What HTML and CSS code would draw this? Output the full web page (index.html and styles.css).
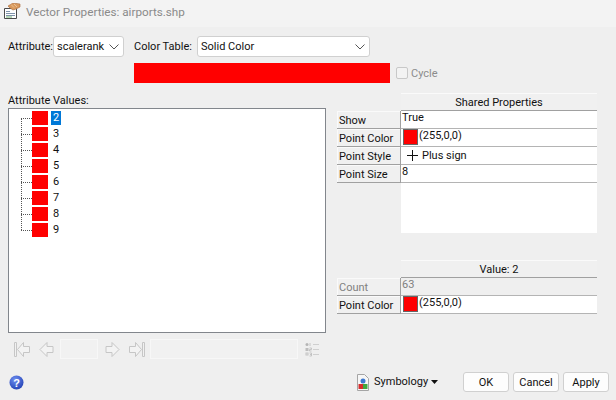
FILE: index.html
```html
<!DOCTYPE html>
<html lang="en">
<head>
<meta charset="utf-8">
<title>Vector Properties: airports.shp</title>
<link rel="stylesheet" href="styles.css">
</head>
<body>
<div class="window">
  <header class="titlebar">
    <svg class="title-icon" width="18" height="18" viewBox="0 0 18 18">
      <path d="M1.500 5.500h12v10h-12z" fill="#fff" stroke="#4a4a4a"/>
      <path d="M3 8.500h4M3 10.500h9M3 12.500h9" stroke="#7f93aa"/>
      <path d="M3 14h6" stroke="#6fae6f"/>
      <path d="M5 3l5-3 7 1v3l-4 2-3 1-3-2z" fill="#d9995c" stroke="#a8693a" stroke-width=".6"/>
      <path d="M8 1.500l3 3M11 1l3 3" stroke="#f0d0a8" stroke-width=".7"/>
    </svg>
    <span class="title-text">Vector Properties: airports.shp</span>
  </header>

  <main class="content">
    <div class="row-top">
      <label class="lbl lbl-attr">Attribute:</label>
      <div class="select sel-attr"><span>scalerank</span><svg class="chev" width="10" height="6" viewBox="0 0 10 6"><path d="M.5.500l4.500 4.500 4.500-4.500" fill="none" stroke="#555"/></svg></div>
      <label class="lbl lbl-table">Color Table:</label>
      <div class="select sel-table"><span>Solid Color</span><svg class="chev" width="10" height="6" viewBox="0 0 10 6"><path d="M.5.500l4.500 4.500 4.500-4.500" fill="none" stroke="#555"/></svg></div>
    </div>
    <div class="row-bar">
      <div class="color-bar"></div>
      <span class="check"></span>
      <span class="cycle">Cycle</span>
    </div>

    <div class="columns">
      <section class="left">
        <div class="lbl values-label">Attribute Values:</div>
        <div class="tree">
          <div class="tree-line"></div>
          <div class="node"><i class="dots"></i><i class="swatch"></i><span class="val sel">2</span></div>
          <div class="node"><i class="dots"></i><i class="swatch"></i><span class="val">3</span></div>
          <div class="node"><i class="dots"></i><i class="swatch"></i><span class="val">4</span></div>
          <div class="node"><i class="dots"></i><i class="swatch"></i><span class="val">5</span></div>
          <div class="node"><i class="dots"></i><i class="swatch"></i><span class="val">6</span></div>
          <div class="node"><i class="dots"></i><i class="swatch"></i><span class="val">7</span></div>
          <div class="node"><i class="dots"></i><i class="swatch"></i><span class="val">8</span></div>
          <div class="node"><i class="dots"></i><i class="swatch"></i><span class="val">9</span></div>
        </div>
        <div class="nav">
          <svg class="nav-ic ic-first" width="17" height="17" viewBox="0 0 17 17"><path d="M.5 1.500h2v14h-2z" fill="#f1f1f1" stroke="#c6c6c6"/><path d="M15.500 5.500h-6v-4l-6 7 6 7v-4h6z" fill="#f3f3f3" stroke="#c6c6c6"/></svg>
          <svg class="nav-ic ic-prev" width="16" height="17" viewBox="0 0 16 17"><path d="M15 5.500h-6v-4l-7 7 7 7v-4h6z" fill="#f3f3f3" stroke="#c6c6c6"/></svg>
          <div class="nav-box nav-small"></div>
          <svg class="nav-ic ic-next" width="16" height="17" viewBox="0 0 16 17"><path d="M1 5.500h6v-4l7 7-7 7v-4h-6z" fill="#f3f3f3" stroke="#c6c6c6"/></svg>
          <svg class="nav-ic ic-last" width="17" height="17" viewBox="0 0 17 17"><path d="M14.500 1.500h2v14h-2z" fill="#f1f1f1" stroke="#c6c6c6"/><path d="M1.500 5.500h6v-4l6 7-6 7v-4h-6z" fill="#f3f3f3" stroke="#c6c6c6"/></svg>
          <div class="nav-box nav-wide"></div>
          <svg class="nav-ic ic-list" width="15" height="15" viewBox="0 0 15 15"><path d="M8 2.500h6M8 7.500h6M8 12.500h6" stroke="#cfcfcf"/><circle cx="2" cy="2.500" r="1.500" fill="#b5b5b5"/><rect x=".5" y="6" width="3" height="3" fill="#bdbdbd"/><rect x="1" y="11" width="2" height="2" fill="none" stroke="#c4c4c4"/><path d="M5 1v3M4.500 6h2v1.500h-2v1.500h2M4.500 11h2v3h-2M5 12.500h1.500" fill="none" stroke="#bbb" stroke-width=".8"/></svg>
        </div>
      </section>

      <section class="right">
        <div class="grid grid-shared">
          <div class="corner"></div><div class="head">Shared Properties</div>
          <div class="key">Show</div><div class="cell">True</div>
          <div class="key">Point Color</div><div class="cell"><i class="cell-swatch"></i>(255,0,0)</div>
          <div class="key">Point Style</div><div class="cell cell-style"><svg class="plus" width="11" height="11" viewBox="0 0 11 11"><path d="M5.500 0v11M0 5.500h11" stroke="#111"/></svg>Plus sign</div>
          <div class="key">Point Size</div><div class="cell">8</div>
          <div class="corner"></div><div class="filler"></div>
        </div>
        <div class="grid grid-value">
          <div class="corner"></div><div class="head">Value: 2</div>
          <div class="key key-dim">Count</div><div class="cell cell-dim">63</div>
          <div class="key">Point Color</div><div class="cell"><i class="cell-swatch"></i>(255,0,0)</div>
        </div>
      </section>
    </div>

    <footer class="bottom">
      <svg class="help" width="15" height="15" viewBox="0 0 15 15"><defs><radialGradient id="hg" cx=".4" cy=".3" r=".8"><stop offset="0" stop-color="#6f8ff0"/><stop offset="1" stop-color="#1c3bb0"/></radialGradient></defs><circle cx="7.500" cy="7.500" r="7" fill="url(#hg)"/><text x="7.500" y="11.500" text-anchor="middle" class="help-q">?</text></svg>
      <div class="symbology">
        <svg width="14" height="17" viewBox="0 0 14 17"><path d="M1.500.5h7l4 4v12h-11z" fill="#f6f6f6" stroke="#a5a5a5"/><circle cx="7" cy="7" r="2.500" fill="#3c78d0"/><rect x="2.500" y="10" width="4.500" height="5" fill="#d62c2c"/><rect x="7" y="10" width="4.500" height="5" fill="#3fa83f"/></svg>
        <span>Symbology</span>
        <svg class="caret" width="7" height="4" viewBox="0 0 7 4"><path d="M0 0h7l-3.500 4z" fill="#111"/></svg>
      </div>
      <button class="btn">OK</button>
      <button class="btn">Cancel</button>
      <button class="btn">Apply</button>
    </footer>
  </main>
</div>
</body>
</html>
```
FILE: styles.css
```css
* { box-sizing: border-box; }
html, body { margin: 0; padding: 0; }
body { width: 616px; height: 400px; overflow: hidden; background: #efefef; font-family: Roboto, "Noto Sans", sans-serif; font-size: 11px; color: #111; line-height: 16px; white-space: nowrap; }
.window { height: 400px; display: flex; flex-direction: column; }
.titlebar { height: 27px; background: #f3f3f3; display: flex; align-items: center; padding: 3px 0 6px 3px; flex: none; }
.title-icon { flex: none; }
.title-text { margin-left: 5px; font-size: 11.7px; color: #8a8a8a; }
.content { flex: 1; padding: 9px 0 0 8px; display: flex; flex-direction: column; }
.row-top { display: flex; align-items: center; height: 21px; }
.lbl-attr { width: 45px; flex: none; padding-top: 1px; }
.lbl-table { width: 63px; margin-left: 10px; flex: none; }
.select { height: 21px; background: #fff; border: 1px solid #d0d0d0; border-radius: 3px; display: flex; align-items: center; justify-content: space-between; flex: none; padding: 0 4px 0 3px; }
.sel-attr { width: 71px; }
.sel-table { width: 173px; }
.row-bar { display: flex; align-items: center; height: 20px; margin-top: 6px; padding-left: 126px; }
.color-bar { width: 256px; height: 20px; background: #f00; }
.check { width: 12px; height: 12px; margin-left: 6px; border: 1px solid #c8c8c8; border-radius: 2px; background: #f3f3f3; }
.cycle { margin-left: 3px; padding-top: 1px; color: #8c8c8c; }
.columns { display: flex; margin-top: 10px; flex: none; }
.left { width: 318px; flex: none; }
.values-label { height: 15px; }
.tree { position: relative; height: 225px; background: #fff; border: 1px solid #82868c; padding: 1px 0 0 0; }
.tree-line { position: absolute; left: 12px; top: 9px; height: 112px; border-left: 1px dotted #555; }
.node { height: 16px; display: flex; align-items: center; }
.dots { width: 11px; margin-left: 12px; border-top: 1px dotted #555; flex: none; }
.swatch { width: 16px; height: 14px; background: #f00; flex: none; }
.val { margin-left: 3px; padding: 0 2px; height: 14px; line-height: 14px; }
.val.sel { background: #0078d7; color: #fff; }
.nav { display: flex; align-items: center; height: 20px; margin-top: 6px; padding-left: 6px; }
.nav-ic { flex: none; }
.ic-prev { margin-left: 7px; }
.nav-box { height: 20px; background: #f1f1f1; border: 1px solid #f7f7f7; flex: none; }
.nav-small { width: 38px; margin-left: 6px; }
.ic-next { margin-left: 7px; }
.ic-last { margin-left: 7px; }
.nav-wide { width: 148px; margin-left: 5px; }
.ic-list { margin-left: 7px; }
.right { width: 260px; margin-left: 11px; flex: none; }
.grid { display: grid; grid-template-columns: 64px 196px; }
.grid-shared { grid-template-rows: repeat(5, 18px) 50px; }
.grid-value { grid-template-rows: repeat(3, 18px); margin-top: 27px; }
.head { background: #f0f0f0; border-top: 1px solid #fafafa; border-bottom: 1px solid #a0a0a0; text-align: center; line-height: 17px; }
.key { background: #f0f0f0; border: solid #a0a0a0; border-width: 0 1px 1px 0; box-shadow: inset 1px 1px #fafafa; padding: 1px 0 0 2px; line-height: 18px; }
.key-dim { color: #808080; }
.cell { background: #fff; border-bottom: 1px solid #b4b4b4; display: flex; align-items: flex-start; line-height: 14px; padding-left: 1px; }
.cell-dim { background: #efefef; color: #808080; }
.cell-swatch { width: 15px; height: 16px; background: #f00; border: 1px solid #666; margin: 0 1px 0 1px; flex: none; }
.cell-style { padding-left: 6px; line-height: 16px; align-items: center; }
.plus { margin-right: 4px; flex: none; }
.filler { background: #fff; }
.bottom { display: flex; align-items: center; height: 20px; margin-top: 13px; padding-left: 1px; }
.help { flex: none; }
.help-q { font: bold 11px "Liberation Sans", sans-serif; fill: #fff; }
.symbology { display: flex; align-items: center; margin-left: 332px; width: 107px; flex: none; }
.symbology span { margin-left: 4px; }
.caret { margin-left: 3px; }
.btn { width: 46px; height: 20px; padding: 1px 0 0; margin-right: 4px; background: #fdfdfd; border: 1px solid #d0d0d0; border-radius: 3px; font: inherit; color: #111; flex: none; }
```
